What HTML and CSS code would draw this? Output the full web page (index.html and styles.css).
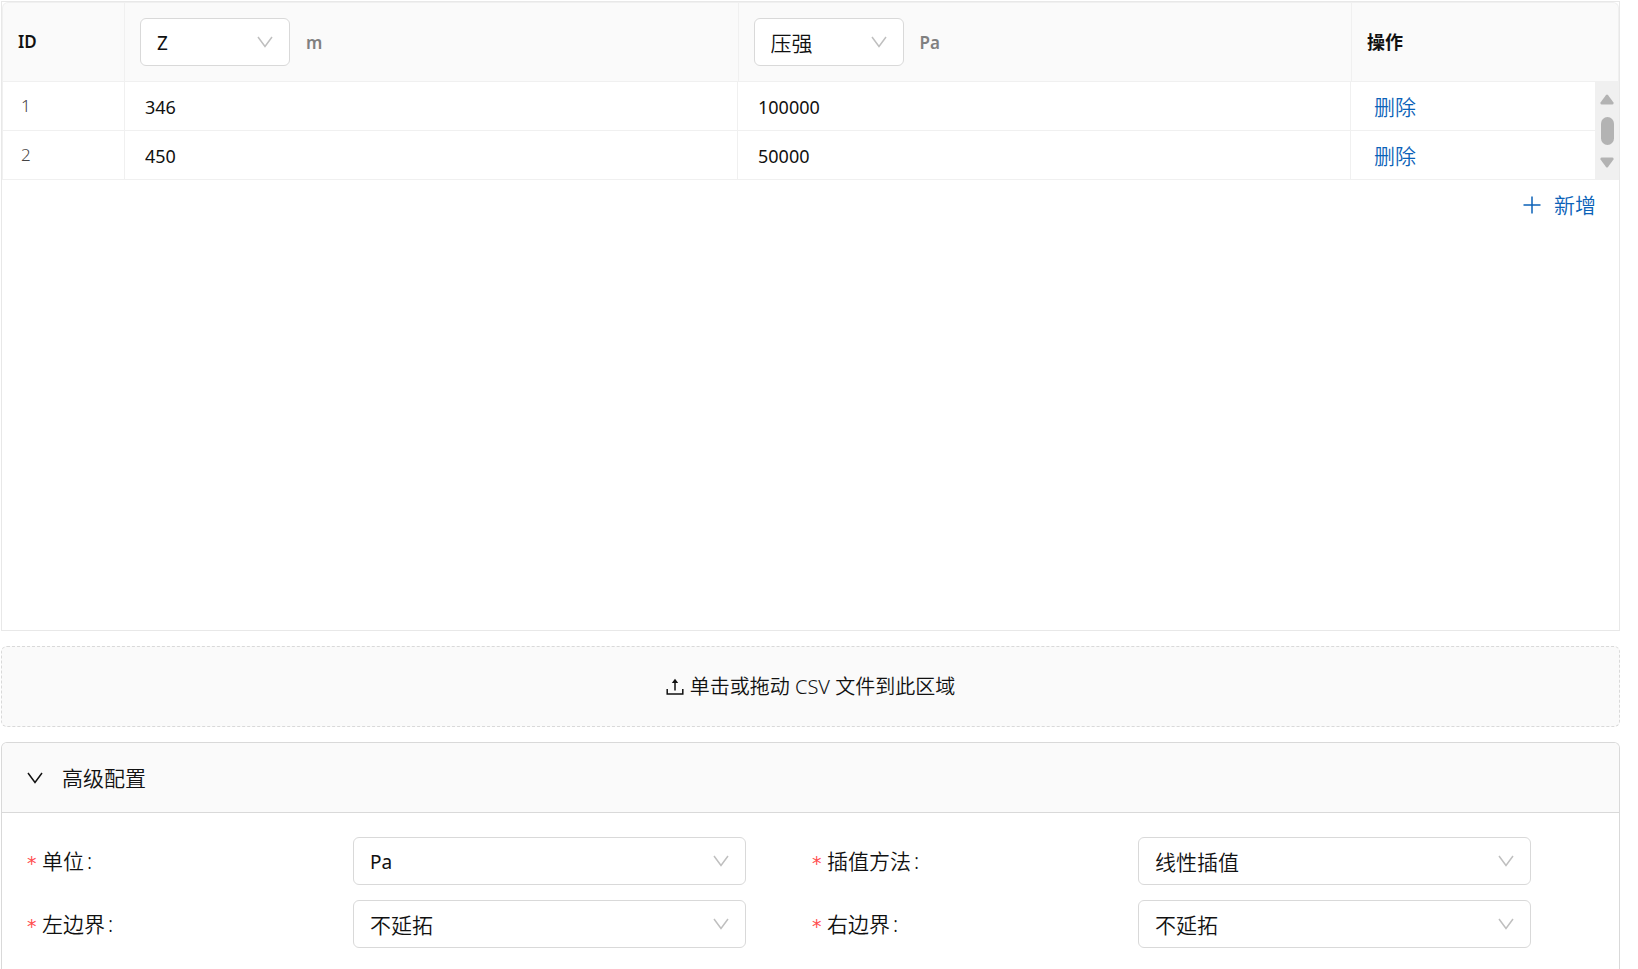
FILE: index.html
```html
<!DOCTYPE html>
<html lang="zh-CN">
<head>
<meta charset="utf-8">
<meta name="viewport" content="width=device-width, initial-scale=1">
<title>压强</title>
<link rel="stylesheet" href="styles.css">
</head>
<body>
<main class="page">
  <section class="panel">
    <table class="grid grid-head">
      <colgroup><col class="col-id"><col><col><col class="col-action-head"></colgroup>
      <thead>
        <tr>
          <th scope="col">ID</th>
          <th scope="col">
            <div class="head-field">
              <span class="select select-small">
                <select class="latin" aria-label="变量"><option>Z</option></select>
                <svg class="chevron" viewBox="0 0 16 12" aria-hidden="true"><path d="M1 1L8 10.500L15 1"/></svg>
              </span>
              <span class="unit">m</span>
            </div>
          </th>
          <th scope="col">
            <div class="head-field">
              <span class="select select-small">
                <select aria-label="物理量"><option>压强</option></select>
                <svg class="chevron" viewBox="0 0 16 12" aria-hidden="true"><path d="M1 1L8 10.500L15 1"/></svg>
              </span>
              <span class="unit">Pa</span>
            </div>
          </th>
          <th scope="col" class="th-action">操作</th>
        </tr>
      </thead>
    </table>
    <div class="scroll-area">
      <table class="grid grid-body">
        <colgroup><col class="col-id"><col><col><col class="col-action"></colgroup>
        <tbody>
          <tr>
            <td class="row-id">1</td>
            <td><input class="cell-input" type="text" value="346" aria-label="Z 1"></td>
            <td><input class="cell-input" type="text" value="100000" aria-label="压强 1"></td>
            <td><button class="link-button" type="button">删除</button></td>
          </tr>
          <tr>
            <td class="row-id">2</td>
            <td><input class="cell-input" type="text" value="450" aria-label="Z 2"></td>
            <td><input class="cell-input" type="text" value="50000" aria-label="压强 2"></td>
            <td><button class="link-button" type="button">删除</button></td>
          </tr>
        </tbody>
      </table>
      <div class="scrollbar" aria-hidden="true">
        <svg class="scroll-arrow" viewBox="0 0 14 11"><path d="M6 1Q7 0 8 1L13.500 8.500Q14 10.500 12.500 10.500H1.500Q0 10.500 .5 8.500Z"/></svg>
        <span class="thumb"></span>
        <svg class="scroll-arrow" viewBox="0 0 14 11"><path d="M6 10Q7 11 8 10L13.500 2.500Q14 .5 12.500 .5H1.500Q0 .5 .5 2.500Z"/></svg>
      </div>
    </div>
    <div class="panel-footer">
      <button class="link-button add-button" type="button">
        <svg class="plus" viewBox="0 0 18 18" aria-hidden="true"><path d="M9 .5V17.500M.5 9H17.500"/></svg>
        <span>新增</span>
      </button>
    </div>
  </section>

  <button class="upload" type="button">
    <svg class="upload-icon" viewBox="0 0 18 18" aria-hidden="true"><path d="M1.200 11V16H16.800V11M9 12.500V3"/><path class="solid" d="M9 .8L12.200 5H5.800Z"/></svg>
    <span>单击或拖动 CSV 文件到此区域</span>
  </button>

  <section class="collapse">
    <button class="collapse-head" type="button" aria-expanded="true">
      <svg class="chevron" viewBox="0 0 16 12" aria-hidden="true"><path d="M1 1L8 10.500L15 1"/></svg>
      <span>高级配置</span>
    </button>
    <form class="form">
      <div class="form-item">
        <label for="unit"><span class="star">*</span>单位<span class="colon">:</span></label>
        <span class="select">
          <select class="latin" id="unit"><option>Pa</option></select>
          <svg class="chevron" viewBox="0 0 16 12" aria-hidden="true"><path d="M1 1L8 10.500L15 1"/></svg>
        </span>
      </div>
      <div class="form-item">
        <label for="method"><span class="star">*</span>插值方法<span class="colon">:</span></label>
        <span class="select">
          <select id="method"><option>线性插值</option></select>
          <svg class="chevron" viewBox="0 0 16 12" aria-hidden="true"><path d="M1 1L8 10.500L15 1"/></svg>
        </span>
      </div>
      <div class="form-item">
        <label for="left"><span class="star">*</span>左边界<span class="colon">:</span></label>
        <span class="select">
          <select id="left"><option>不延拓</option></select>
          <svg class="chevron" viewBox="0 0 16 12" aria-hidden="true"><path d="M1 1L8 10.500L15 1"/></svg>
        </span>
      </div>
      <div class="form-item">
        <label for="right"><span class="star">*</span>右边界<span class="colon">:</span></label>
        <span class="select">
          <select id="right"><option>不延拓</option></select>
          <svg class="chevron" viewBox="0 0 16 12" aria-hidden="true"><path d="M1 1L8 10.500L15 1"/></svg>
        </span>
      </div>
    </form>
  </section>
</main>
</body>
</html>
```
FILE: styles.css
```css
:root {
  --text: #111;
  --muted: #808080;
  --link: #0b62b8;
  --line: #f0f0f0;
  --panel-line: #e8e8e8;
  --border: #d9d9d9;
  --fill: #fafafa;
}

* {
  box-sizing: border-box;
}

body {
  margin: 0;
  background: #fff;
  color: var(--text);
  font-family: "Noto Sans", "Noto Sans CJK SC", sans-serif;
  font-size: 21px;
  font-weight: 350;
  line-height: 32px;
}

button,
input,
select {
  margin: 0;
  padding: 0;
  border: 0;
  background: none;
  color: inherit;
  font: inherit;
}

button,
select {
  cursor: pointer;
}

svg {
  display: block;
  flex: none;
  fill: none;
  stroke: currentColor;
}

.page {
  display: flex;
  flex-direction: column;
  gap: 15px;
  min-height: 100vh;
  padding: 1px 18px 0 1px;
}

/* Data table */
.panel {
  min-height: 630px;
  border: 1px solid var(--panel-line);
}

.grid {
  width: 100%;
  table-layout: fixed;
  border-collapse: separate;
  border-spacing: 0;
}

.grid-head {
  border: 1px solid var(--line);
  border-bottom: 0;
  border-radius: 6px 6px 0 0;
  background: var(--fill);
}

.col-id {
  width: 122px;
}

.col-action-head {
  width: 266px;
}

.col-action {
  width: 244px;
}

.grid th,
.grid td {
  border-right: 1px solid var(--line);
  border-bottom: 1px solid var(--line);
  text-align: left;
}

.grid th:last-child,
.grid td:last-child {
  border-right: 0;
}

.grid th {
  height: 79px;
  padding: 0 15px;
  font-size: 17px;
  font-weight: 600;
}

.grid .th-action {
  font-size: 18px;
  font-weight: 700;
}

.head-field {
  display: flex;
  align-items: center;
  gap: 16px;
}

.unit {
  padding-top: 1px;
  color: var(--muted);
}

.grid td {
  height: 49px;
  padding: 2px 20px 0;
}

.grid .row-id {
  padding: 0 18px;
  color: #444;
  font-size: 17px;
}

.cell-input {
  display: block;
  width: 100%;
  height: 32px;
  font-size: 18px;
  font-weight: 400;
}

.scroll-area {
  display: flex;
}

.grid-body {
  flex: 1;
  width: auto;
  border-left: 1px solid var(--line);
}

.scrollbar {
  display: flex;
  flex-direction: column;
  align-items: center;
  justify-content: space-between;
  width: 24px;
  padding: 12px 0;
  background: #f0f0f0;
}

.scroll-arrow {
  width: 14px;
  height: 11px;
  fill: #b3b3b3;
  stroke: none;
}

.thumb {
  width: 13px;
  height: 28px;
  border-radius: 7px;
  background: #b3b3b3;
}

.link-button {
  display: inline-flex;
  align-items: center;
  padding: 0 3px;
  color: var(--link);
}

.panel-footer {
  display: flex;
  justify-content: flex-end;
  padding: 9px 20px;
}

.add-button {
  gap: 13px;
}

.plus {
  width: 18px;
  height: 18px;
  stroke-width: 1.500;
}

/* Selects */
.select {
  display: grid;
  align-items: center;
}

.select select {
  grid-area: 1 / 1;
  width: 100%;
  height: 48px;
  padding: 2px 40px 0 16px;
  border: 1px solid var(--border);
  border-radius: 6px;
  background: #fff;
  color: var(--text);
  font-size: 21px;
  font-weight: 350;
  appearance: none;
}

.select .latin {
  font-size: 19px;
  font-weight: 400;
}

.select-small {
  width: 150px;
}

.chevron {
  width: 16px;
  height: 12px;
  stroke-width: 1.500;
}

.select .chevron {
  grid-area: 1 / 1;
  justify-self: end;
  margin-right: 17px;
  color: #bfbfbf;
  pointer-events: none;
}

/* CSV upload */
.upload {
  display: flex;
  align-items: center;
  justify-content: center;
  gap: 6px;
  height: 81px;
  border: 1px dashed var(--border);
  border-radius: 6px;
  background: var(--fill);
  font-size: 20px;
}

.upload-icon {
  width: 18px;
  height: 18px;
  stroke-width: 1.500;
}

.upload-icon .solid {
  fill: currentColor;
  stroke: none;
}

/* Advanced settings */
.collapse {
  flex: 1;
  border: 1px solid var(--border);
  border-bottom: 0;
  border-radius: 6px 6px 0 0;
}

.collapse-head {
  display: flex;
  align-items: center;
  gap: 19px;
  width: 100%;
  height: 70px;
  padding: 0 25px;
  border-bottom: 1px solid var(--border);
  border-radius: 5px 5px 0 0;
  background: var(--fill);
}

.form {
  display: grid;
  grid-template-columns: 1fr 1fr;
  row-gap: 15px;
  padding: 24px 23px 0 24px;
}

.form-item {
  display: grid;
  grid-template-columns: 10fr 12fr 2fr;
  align-items: center;
}

.form-item label {
  display: flex;
  align-items: center;
}

.star {
  width: 16px;
  padding-top: 3px;
  color: #ff4d4f;
  font-family: "DejaVu Sans Mono", monospace;
  font-size: 19px;
  font-weight: 400;
}

.colon {
  margin-left: 3px;
}
```
